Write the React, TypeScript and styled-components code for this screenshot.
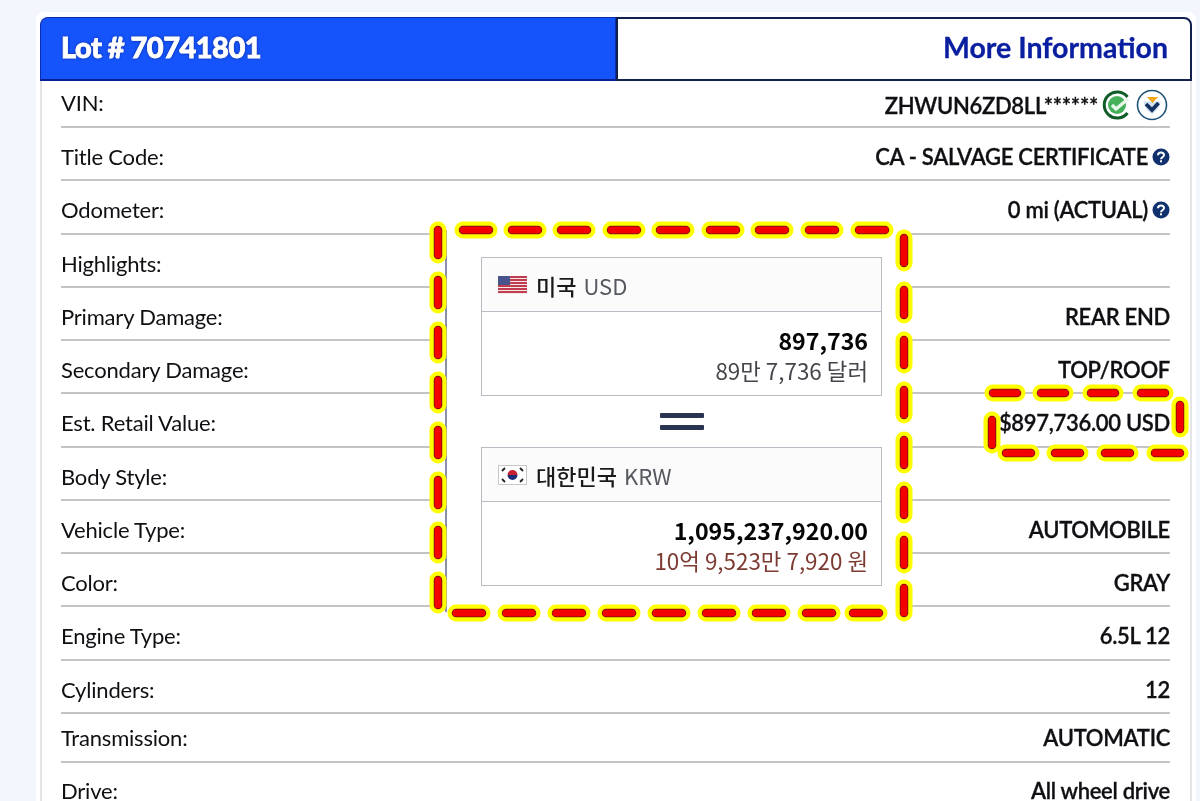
import React from "react";
import styled, { createGlobalStyle } from "styled-components";

const GlobalStyle = createGlobalStyle`
    html, body {
        margin: 0;
        padding: 0;
        height: 801px;
        overflow: hidden;
        background: #f3f6fc;
        font-family: Lato, "Noto Sans CJK KR", sans-serif;
    }
`

const Page = styled.div`
    position: relative;
    width: 1200px;
    height: 801px;
    overflow: hidden;
    padding: 12px 4px 0 36px;
    box-sizing: border-box;
    filter: blur(0.35px);
`

const Card = styled.div`
    background: #fff;
    padding: 5px 4px 0 4px;
    border-radius: 8px 8px 0 0;
`

const Tabs = styled.div`
    display: flex;
    height: 64px;
`

const LotTab = styled.div`
    flex: 0 0 576px;
    box-sizing: border-box;
    display: flex;
    align-items: center;
    padding: 0 0 5px 20px;
    background: #1553fb;
    border: 1px solid #0a2fa8;
    border-bottom: 2px solid #0a1f8f;
    border-radius: 8px 0 0 0;
    color: #fff;
    font-size: 29px;
    font-weight: 900;
    letter-spacing: -0.5px;
    -webkit-text-stroke: 0.8px #fff;
    text-shadow: 0 0 3px #0b1a66;
`

const InfoTab = styled.div`
    flex: 0 0 576px;
    box-sizing: border-box;
    display: flex;
    align-items: center;
    justify-content: flex-end;
    padding: 0 22px 4px 0;
    background: #fff;
    border: 2px solid #10204f;
    border-radius: 0 8px 0 0;
    color: #0a1ea0;
    font-size: 28.5px;
    font-weight: 700;
    -webkit-text-stroke: 0.3px #0a1ea0;
`

const Body = styled.div`
    border-left: 2px solid #e2e4e8;
    border-right: 2px solid #e2e4e8;
    padding: 0 20px 0 19px;
`

const Row = styled.div<{ $height?: number, $top?: number }>`
    display: flex;
    align-items: flex-start;
    justify-content: space-between;
    height: ${props => props.$height || 53.25}px;
    box-sizing: border-box;
    padding-top: ${props => props.$top || 15}px;
    border-bottom: 2px solid #c4c4c4;
    font-size: 22px;
    line-height: 27px;
    color: #101014;
`

const Label = styled.span`
    letter-spacing: -0.2px;
`

const Value = styled.span`
    display: flex;
    align-items: center;
    gap: 4px;
    font-weight: 600;
    letter-spacing: -0.3px;
    white-space: nowrap;
    -webkit-text-stroke: 0.3px #101014;
`

const Popup = styled.div`
    position: absolute;
    left: 445px;
    top: 230px;
    width: 460px;
    height: 382px;
    box-sizing: border-box;
    padding: 27px 23px 0 34px;
    background: #fff;
    border-left: 2px solid #8b90aa;
    font-family: "Noto Sans CJK KR", "Open Sans", sans-serif;
`

const Currency = styled.div`
    width: 401px;
    height: 139px;
    box-sizing: border-box;
    border: 1.5px solid #b9bcc2;
    display: flex;
    flex-direction: column;
`

const CurrencyHead = styled.div`
    height: 53px;
    flex: none;
    display: flex;
    align-items: center;
    gap: 9px;
    padding-left: 16px;
    background: #fbfbfb;
    border-bottom: 1.5px solid #b9bcc2;
    font-size: 22px;
    font-weight: 500;
    color: #1a1a1a;
`

const Code = styled.span`
    font-size: 22px;
    font-weight: 400;
    color: #55585e;
    margin-left: 2px;
`

const Amounts = styled.div`
    flex: 1;
    display: flex;
    flex-direction: column;
    align-items: flex-end;
    justify-content: center;
    padding: 3px 13px 0 0;
`

const Amount = styled.div`
    font-size: 23.2px;
    line-height: 31px;
    font-weight: 700;
    color: #050505;
`

const Spoken = styled.div<{ $red?: boolean }>`
    font-size: 22.4px;
    line-height: 29px;
    color: ${props => props.$red ? "#7c3a32" : "#43454a"};
`

const EqualsMark = styled.div`
    height: 51px;
    width: 401px;
    display: flex;
    flex-direction: column;
    align-items: center;
    justify-content: center;
    gap: 7px;
`

const EqualsBar = styled.i`
    display: block;
    width: 44px;
    height: 5px;
    background: #2a3350;
    border-radius: 1px;
`

const Marks = styled.svg`
    position: absolute;
    left: 0;
    top: 0;
    pointer-events: none;
`

type Dash = [number, number, number, number]

// start and length are the outer ends of the red part, caps included
const across = (y: number, xs: number[], len: number): Dash[] => xs.map(x => [x + 3, y, x + len - 3, y])
const down = (x: number, ys: number[], len: number): Dash[] => ys.map(y => [x, y + 3, x, y + len - 3])

const dashes: Dash[] = [
    ...across(230, [460, 509, 558, 608, 657, 707, 756, 806, 856], 32),
    ...across(613, [453, 503, 553, 603, 653, 703, 753, 803, 850], 32),
    ...down(438, [227, 277, 327, 377, 427, 477, 527, 577], 31),
    ...down(904, [235, 287, 337, 387, 437, 487, 537, 585], 31),
    ...across(393, [990, 1038, 1088, 1138], 30),
    ...across(453, [1003, 1052, 1102, 1152], 31),
    ...down(1180, [402], 30),
    ...down(992, [417], 31),
]

function DashMarks() {
    return (
        <Marks width="1200" height="801" viewBox="0 0 1200 801">
            {dashes.map((d, i) => (
                <line key={"y" + i} x1={d[0]} y1={d[1]} x2={d[2]} y2={d[3]} stroke="#ffff00" strokeWidth="17" strokeLinecap="round" />
            ))}
            {dashes.map((d, i) => (
                <line key={"k" + i} x1={d[0]} y1={d[1]} x2={d[2]} y2={d[3]} stroke="#6b1010" strokeWidth="8.500" strokeLinecap="round" />
            ))}
            {dashes.map((d, i) => (
                <line key={"r" + i} x1={d[0]} y1={d[1]} x2={d[2]} y2={d[3]} stroke="#f40000" strokeWidth="7" strokeLinecap="round" />
            ))}
        </Marks>
    )
}

function HelpIcon() {
    return (
        <svg width="18" height="18" viewBox="0 0 18 18">
            <circle cx="9" cy="9" r="8.5" fill="#10306e" />
            <path d="M6 7.2C6 5.4 7.4 4.5 9 4.5s3 .9 3 2.5c0 2.2-3 2.200-3 4.200" fill="none" stroke="#fff" strokeWidth="2" />
            <rect x="8" y="12.300" width="2" height="2" fill="#fff" />
        </svg>
    )
}

function GreenCheck() {
    return (
        <svg width="30" height="30" viewBox="0 0 30 30">
            <path d="M25.500 23A13 13 0 1 1 25.500 7" fill="none" stroke="#0f5c28" strokeWidth="3" />
            <circle cx="15" cy="15" r="9" fill="#45b05a" />
            <path d="M10 15l4 4 12-10" fill="none" stroke="#e6f7e8" strokeWidth="3.500" />
        </svg>
    )
}

function ShieldCheck() {
    return (
        <svg width="34" height="32" viewBox="0 0 34 32">
            <circle cx="16" cy="16" r="14.500" fill="#fff" stroke="#1d5578" strokeWidth="1.600" />
            <path d="M7.500 12.500c1 6 4 10 8.500 12.500 4.500-2.500 7.500-6.500 8.500-12.500" fill="#cfe3f2" />
            <path d="M11 8h11l-5.500 6z" fill="#f2a71b" />
            <path d="M10 15l6 6 6.500-7" fill="none" stroke="#15305f" strokeWidth="3.800" />
        </svg>
    )
}

function UsFlag() {
    return (
        <svg width="29" height="18" viewBox="0 0 29 18">
            <rect width="29" height="18" fill="#f4e8e8" />
            {[0, 3, 6, 9, 12, 15].map(y => (
                <rect key={y} y={y} width="29" height="2" fill="#c23c50" />
            ))}
            <rect width="12" height="9" fill="#49548c" />
        </svg>
    )
}

function KrFlag() {
    return (
        <svg width="29" height="20" viewBox="0 0 29 20">
            <rect x="0.500" y="0.500" width="28" height="19" fill="#fff" stroke="#c8c8c8" />
            <path d="M9.500 10a5 5 0 0 1 10 0z" fill="#c8202f" />
            <path d="M9.500 10a5 5 0 0 0 10 0z" fill="#1b2f78" />
            <path d="M4 6l3-3M22 3l3 3M4 14l3 3M22 17l3-3" stroke="#222" strokeWidth="1.800" />
        </svg>
    )
}

const rows: { label: string, value?: React.ReactNode, height?: number, top?: number }[] = [
    { label: "VIN:", height: 47, top: 8, value: <>ZHWUN6ZD8LL****** <GreenCheck /><ShieldCheck /></> },
    { label: "Title Code:", value: <>CA - SALVAGE CERTIFICATE <HelpIcon /></> },
    { label: "Odometer:", value: <>0 mi (ACTUAL) <HelpIcon /></> },
    { label: "Highlights:" },
    { label: "Primary Damage:", value: "REAR END" },
    { label: "Secondary Damage:", value: "TOP/ROOF" },
    { label: "Est. Retail Value:", value: "$897,736.00 USD" },
    { label: "Body Style:" },
    { label: "Vehicle Type:", value: "AUTOMOBILE" },
    { label: "Color:", value: "GRAY" },
    { label: "Engine Type:", value: "6.5L 12" },
    { label: "Cylinders:", value: "12" },
    { label: "Transmission:", height: 49, top: 10, value: "AUTOMATIC" },
    { label: "Drive:", top: 14, value: "All wheel drive" },
]

export default function App() {
    return (
        <Page>
            <GlobalStyle />
            <Card>
                <Tabs>
                    <LotTab>Lot # 70741801</LotTab>
                    <InfoTab>More Information</InfoTab>
                </Tabs>
                <Body>
                    {rows.map(row => (
                        <Row key={row.label} $height={row.height} $top={row.top}>
                            <Label>{row.label}</Label>
                            {row.value && <Value>{row.value}</Value>}
                        </Row>
                    ))}
                </Body>
            </Card>
            <Popup>
                <Currency>
                    <CurrencyHead>
                        <UsFlag />
                        <span>미국 <Code>USD</Code></span>
                    </CurrencyHead>
                    <Amounts>
                        <Amount>897,736</Amount>
                        <Spoken>89만 7,736 달러</Spoken>
                    </Amounts>
                </Currency>
                <EqualsMark>
                    <EqualsBar />
                    <EqualsBar />
                </EqualsMark>
                <Currency>
                    <CurrencyHead>
                        <KrFlag />
                        <span>대한민국 <Code>KRW</Code></span>
                    </CurrencyHead>
                    <Amounts>
                        <Amount>1,095,237,920.00</Amount>
                        <Spoken $red>10억 9,523만 7,920 원</Spoken>
                    </Amounts>
                </Currency>
            </Popup>
            <DashMarks />
        </Page>
    )
}
